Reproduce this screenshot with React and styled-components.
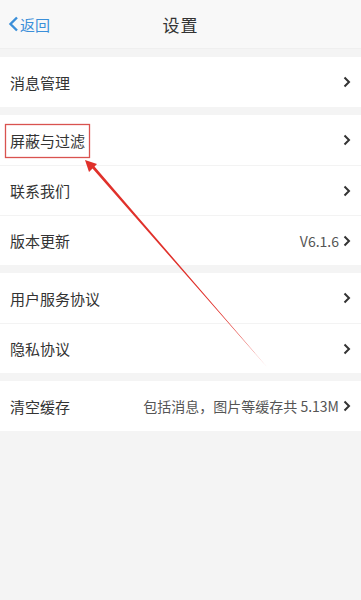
import React from 'react'
import styled, { createGlobalStyle } from 'styled-components'

const GlobalStyle = createGlobalStyle`
  html, body {
    margin: 0;
    padding: 0;
    background: #f4f4f4;
    font-family: "Noto Sans CJK SC", "Noto Sans", sans-serif;
  }
`

const Page = styled.div`
  position: relative;
  width: 361px;
  min-height: 600px;
  background: #f4f4f4;
`

const Header = styled.div`
  height: 49px;
  background: #f8f8f8;
  display: flex;
  align-items: center;
  justify-content: center;
  position: relative;
  border-bottom: 1px solid #efefef;
  box-sizing: border-box;
`

const Back = styled.div`
  position: absolute;
  left: 8px;
  top: 0;
  bottom: 0;
  display: flex;
  align-items: center;
  gap: 1px;
  color: #3b8fd9;
  font-size: 15px;
`

const Title = styled.div`
  font-size: 17px;
  color: #333;
  letter-spacing: 1px;
`

const Group = styled.div`
  background: #fff;
  margin-top: 8px;
`

const Row = styled.div`
  height: 50px;
  display: flex;
  align-items: center;
  padding: 0 10px 0 10px;
  box-sizing: border-box;
  border-top: ${(p) => (p.first ? 'none' : '1px solid #f3f3f3')};
`

const Label = styled.div`
  flex: 1;
  font-size: 15px;
  color: #333;
`

const Value = styled.div`
  font-size: 14px;
  color: #555;
  margin-right: 4px;
`

const Annotation = styled.svg`
  position: absolute;
  left: 0;
  top: 0;
  pointer-events: none;
`

const Chevron = () => (
  <svg width="8" height="12" viewBox="0 0 8 12">
    <polyline points="1.5,1.5 6,6 1.5,10.5" fill="none" stroke="#333" strokeWidth="2" />
  </svg>
)

const groups = [
  [{ label: '消息管理' }],
  [{ label: '屏蔽与过滤' }, { label: '联系我们' }, { label: '版本更新', value: 'V6.1.6' }],
  [{ label: '用户服务协议' }, { label: '隐私协议' }],
  [{ label: '清空缓存', value: '包括消息，图片等缓存共 5.13M' }],
]

export default function App() {
  return (
    <Page>
      <GlobalStyle />
      <Header>
        <Back>
          <svg width="11" height="16" viewBox="0 0 11 16">
            <polyline points="9,1.5 2.5,8 9,14.5" fill="none" stroke="#3b8fd9" strokeWidth="2.4" />
          </svg>
          返回
        </Back>
        <Title>设置</Title>
      </Header>
      {groups.map((g, gi) => (
        <Group key={gi}>
          {g.map((item, i) => (
            <Row key={item.label} first={i === 0}>
              <Label>{item.label}</Label>
              {item.value && <Value>{item.value}</Value>}
              <Chevron />
            </Row>
          ))}
        </Group>
      ))}
      <Annotation width="361" height="600">
        <rect x="5.5" y="124.5" width="84" height="33" fill="none" stroke="#d9534f" strokeWidth="1.3" />
        <polygon points="85,160 97,164 94.5,166.5 267,367 92.5,168.5 89,172" fill="#e0312b" />
      </Annotation>
    </Page>
  )
}
